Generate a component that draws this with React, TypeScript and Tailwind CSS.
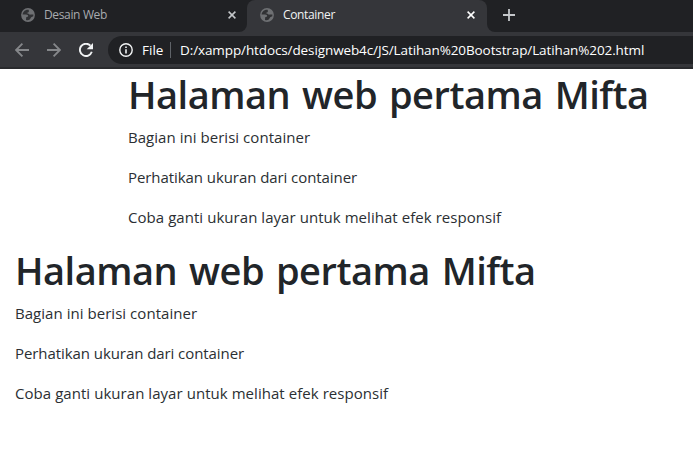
function Globe() {
  return (
    <svg width="14" height="14" viewBox="0 0 14 14" className="shrink-0">
      <circle cx="7" cy="7" r="6.9" fill="#6e7073" />
      <path d="M7.6 1.7 C4.4 1.2 1.8 3.6 1.6 6.6 L5 6.6 C6.6 6.6 7.3 7.4 7.1 8.4 L5.2 9.2 L5 12 C7 12.8 8.8 12 9.4 10.6 L10.2 9.2 L12.3 8.2 L12.4 6.6 L9.6 6.6 C8.4 6.8 7.8 6 7 5.6 L5.4 4.9 L7.2 4.4 L8 3.2 Z" fill="#303134" />
    </svg>
  );
}

function Close({ color }: { color: string }) {
  return (
    <svg width="8" height="8" viewBox="0 0 8 8" className="shrink-0">
      <path d="M.6 .6 L7.4 7.4 M7.4 .6 L.6 7.4" stroke={color} strokeWidth="1.5" />
    </svg>
  );
}

function Arrow({ flip }: { flip?: boolean }) {
  return (
    <svg width="14" height="14" viewBox="0 0 14 14" className={flip ? "shrink-0 -scale-x-100" : "shrink-0"}>
      <path d="M14 7 H1.4 M7.4 .7 L1.1 7 L7.4 13.3" fill="none" stroke="#85878a" strokeWidth="1.8" />
    </svg>
  );
}

function Content() {
  return (
    <>
      <h1 className="mb-2 h-12 pt-px text-[38px] leading-[48px] font-semibold tracking-[-0.5px] [word-spacing:2.5px]">Halaman web pertama Mifta</h1>
      <p className="mb-4 text-[15px] leading-6 tracking-[0.04px] text-[#2b2f33]">Bagian ini berisi container</p>
      <p className="mb-4 text-[15px] leading-6 tracking-[-0.07px] text-[#2b2f33]">Perhatikan ukuran dari container</p>
      <p className="mb-4 text-[15px] leading-6 tracking-[0.05px] text-[#2b2f33]">Coba ganti ukuran layar untuk melihat efek responsif</p>
    </>
  );
}

export default function App() {
  return (
    <div className="h-[467px] w-[693px] overflow-hidden bg-white font-['Open_Sans','Noto_Sans',sans-serif] whitespace-nowrap text-[#212529]">
      <header className="h-[69px] border-b-2 border-[#292a2d] bg-[#35363a]">
        <div className="flex h-8 bg-[#35363a] text-[12px]">
          <div className="flex w-[247px] items-center rounded-br-lg bg-[#202124] pr-[11px] pb-0.5 pl-[21px] text-[#a8abaf]">
            <Globe />
            <span className="ml-[9px] flex-1 tracking-[-0.35px]">Desain Web</span>
            <Close color="#c4c7ca" />
          </div>
          <div className="w-[240px] bg-[#202124]">
            <div className="flex h-8 items-center rounded-t-lg bg-[#35363a] pr-3 pb-0.5 pl-[13px] text-[#f1f3f4]">
              <Globe />
              <span className="ml-[9px] flex-1 tracking-[-0.35px]">Container</span>
              <Close color="#ffffff" />
            </div>
          </div>
          <div className="flex flex-1 items-center rounded-bl-lg bg-[#202124] pb-0.5 pl-4">
            <svg width="12" height="12" viewBox="0 0 12 12">
              <path d="M6 0 V12 M0 6 H12" stroke="#c4c7ca" strokeWidth="1.8" />
            </svg>
          </div>
        </div>
        <div className="flex h-9 items-center pl-[15px]">
          <Arrow />
          <div className="ml-[18px] flex"><Arrow flip /></div>
          <svg width="14" height="14" viewBox="0 0 14 14" className="ml-[18px] shrink-0">
            <path d="M11.4 2.6 A6.1 6.1 0 1 0 12.8 8.8" fill="none" stroke="#f1f3f4" strokeWidth="1.9" />
            <path d="M14 0 V6.3 H7.7 Z" fill="#f1f3f4" />
          </svg>
          <div className="ml-[15px] flex h-7 flex-1 items-center rounded-l-full bg-[#202124] pl-[11px] text-[13.5px] text-white">
            <svg width="14" height="14" viewBox="0 0 14 14" className="shrink-0">
              <circle cx="7" cy="7" r="6.2" fill="none" stroke="#f1f3f4" strokeWidth="1.4" />
              <path d="M6.2 6.2 h1.6 v4.3 h-1.6 Z M6.2 3.4 h1.6 v1.6 h-1.6 Z" fill="#f1f3f4" />
            </svg>
            <span className="ml-[9px] w-[28px]">File</span>
            <span className="h-4 w-px bg-[#5f6368]" />
            <span className="ml-[9px] tracking-[-0.105px]">D:/xampp/htdocs/designweb4c/JS/Latihan%20Bootstrap/Latihan%202.html</span>
          </div>
        </div>
      </header>
      <main>
        <section className="pl-32"><Content /></section>
        <section className="pl-[15px]"><Content /></section>
      </main>
    </div>
  );
}
